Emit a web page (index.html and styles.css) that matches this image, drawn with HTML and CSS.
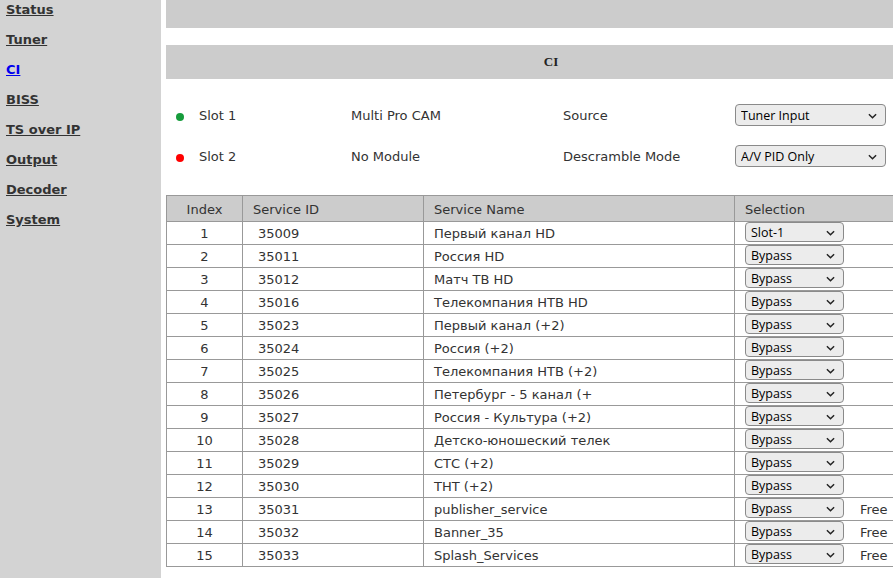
FILE: index.html
```html
<!DOCTYPE html>
<html lang="en">
<head>
    <meta charset="UTF-8">
    <meta name="viewport" content="width=device-width, initial-scale=1.0">
    <title>CI</title>
    <link rel="stylesheet" href="styles.css">
</head>
<body>
    <div class="menu">
        <a href="#">Status</a>
        <a href="#">Tuner</a>
        <a href="#" class="current">CI</a>
        <a href="#">BISS</a>
        <a href="#">TS over IP</a>
        <a href="#">Output</a>
        <a href="#">Decoder</a>
        <a href="#">System</a>
    </div>

    <div class="main">
        <div class="topbar"></div>
        <div class="title">CI</div>

        <div class="slots">
            <span class="dot green"></span>
            <span>Slot 1</span>
            <span>Multi Pro CAM</span>
            <span>Source</span>
            <span class="sel wide">
                <select>
                    <option>Tuner Input</option>
                    <option>TS over IP</option>
                </select>
                <svg viewBox="0 0 10 6"><path d="M1 1l4 4 4-4"/></svg>
            </span>

            <span class="dot red"></span>
            <span>Slot 2</span>
            <span>No Module</span>
            <span>Descramble Mode</span>
            <span class="sel wide">
                <select>
                    <option>A/V PID Only</option>
                    <option>All PIDs</option>
                </select>
                <svg viewBox="0 0 10 6"><path d="M1 1l4 4 4-4"/></svg>
            </span>
        </div>

        <table class="services">
            <colgroup>
                <col style="width: 76px">
                <col style="width: 181px">
                <col style="width: 311px">
                <col>
            </colgroup>
            <thead>
                <tr>
                    <th class="idx">Index</th>
                    <th>Service ID</th>
                    <th>Service Name</th>
                    <th>Selection</th>
                </tr>
            </thead>
            <tbody id="rows"></tbody>
        </table>
    </div>

    <script>
        const services = [
            [1, 35009, "Первый канал HD", "Slot-1", ""],
            [2, 35011, "Россия HD", "Bypass", ""],
            [3, 35012, "Матч ТВ HD", "Bypass", ""],
            [4, 35016, "Телекомпания НТВ HD", "Bypass", ""],
            [5, 35023, "Первый канал (+2)", "Bypass", ""],
            [6, 35024, "Россия (+2)", "Bypass", ""],
            [7, 35025, "Телекомпания НТВ (+2)", "Bypass", ""],
            [8, 35026, "Петербург - 5 канал (+", "Bypass", ""],
            [9, 35027, "Россия - Культура (+2)", "Bypass", ""],
            [10, 35028, "Детско-юношеский телек", "Bypass", ""],
            [11, 35029, "СТС (+2)", "Bypass", ""],
            [12, 35030, "ТНТ (+2)", "Bypass", ""],
            [13, 35031, "publisher_service", "Bypass", "Free"],
            [14, 35032, "Banner_35", "Bypass", "Free"],
            [15, 35033, "Splash_Services", "Bypass", "Free"]
        ];

        const rows = document.getElementById("rows");
        services.forEach(function (s) {
            let tr = document.createElement("tr");
            let opts = ["Bypass", "Slot-1", "Slot-2"].map(function (o) {
                return `<option${o === s[3] ? " selected" : ""}>${o}</option>`;
            }).join("");
            tr.innerHTML =
                `<td class="idx">${s[0]}</td>` +
                `<td class="sid">${s[1]}</td>` +
                `<td>${s[2]}</td>` +
                `<td class="pick"><span class="sel"><select>${opts}</select>` +
                `<svg viewBox="0 0 10 6"><path d="M1 1l4 4 4-4"/></svg></span>` +
                `<span class="free">${s[4]}</span></td>`;
            rows.appendChild(tr);
        });
    </script>
</body>
</html>
```

FILE: styles.css
```css
html, body {
    margin: 0;
    height: 100%;
    overflow: hidden;
}
body {
    display: flex;
    font-family: "DejaVu Sans", Verdana, sans-serif;
    font-size: 13px;
    color: #333;
    background: #fff;
}
.menu {
    flex: 0 0 161px;
    background: #d3d3d3;
    padding-left: 6px;
    box-sizing: border-box;
}
.menu a {
    display: block;
    width: max-content;
    line-height: 20px;
    margin-bottom: 10px;
    font-weight: bold;
    color: #333;
}
.menu a.current {
    color: #0000ee;
}
.main {
    flex: 0 0 770px;
    margin-left: 5px;
}
.topbar {
    height: 28px;
    background: #ccc;
}
.title {
    margin-top: 17px;
    height: 34px;
    line-height: 34px;
    background: #ccc;
    text-align: center;
    font-family: "Liberation Serif", serif;
    font-weight: bold;
    font-size: 13px;
    color: #222;
}
.slots {
    display: grid;
    grid-template-columns: 33px 152px 212px 172px auto;
    grid-auto-rows: 22px;
    row-gap: 19px;
    align-items: center;
    justify-items: start;
    margin: 25px 0 28px;
}
.dot {
    width: 8px;
    height: 8px;
    border-radius: 50%;
    margin: 4px 0 0 10px;
}
.dot.green { background: #169c3c; }
.dot.red { background: #f00; }
.sel {
    position: relative;
    display: inline-block;
    vertical-align: top;
    line-height: 0;
}
.sel select {
    appearance: none;
    -webkit-appearance: none;
    width: 99px;
    height: 20px;
    margin: 0;
    padding: 0 0 0 5px;
    border: 1px solid #8a8a8a;
    border-radius: 4px;
    background: #ececec;
    font-family: "Open Sans", sans-serif;
    font-size: 12.5px;
    color: #000;
    box-sizing: border-box;
}
.sel.wide select {
    width: 151px;
    height: 22px;
}
.sel svg {
    position: absolute;
    right: 9px;
    top: 8px;
    width: 9px;
    height: 6px;
    fill: none;
    stroke: #222;
    stroke-width: 1.6;
    pointer-events: none;
}
.sel.wide svg {
    top: 9px;
}
.services {
    width: 770px;
    border-collapse: collapse;
    table-layout: fixed;
}
.services th, .services td {
    border: 1px solid #999;
    padding: 0 0 0 10px;
    text-align: left;
    font-weight: normal;
    white-space: nowrap;
    overflow: hidden;
}
.services th {
    height: 23px;
    padding-top: 2px;
    background: #ccc;
}
.services td {
    height: 21px;
    padding-top: 1px;
    line-height: 21px;
    vertical-align: top;
}
.services .idx {
    padding-left: 0;
    text-align: center;
}
.services td.sid {
    padding-left: 15px;
}
.services td.pick {
    height: 22px;
    padding-top: 0;
}
.free {
    display: inline-block;
    vertical-align: top;
    margin-left: 16px;
    line-height: 21px;
    padding-top: 1px;
}
```
